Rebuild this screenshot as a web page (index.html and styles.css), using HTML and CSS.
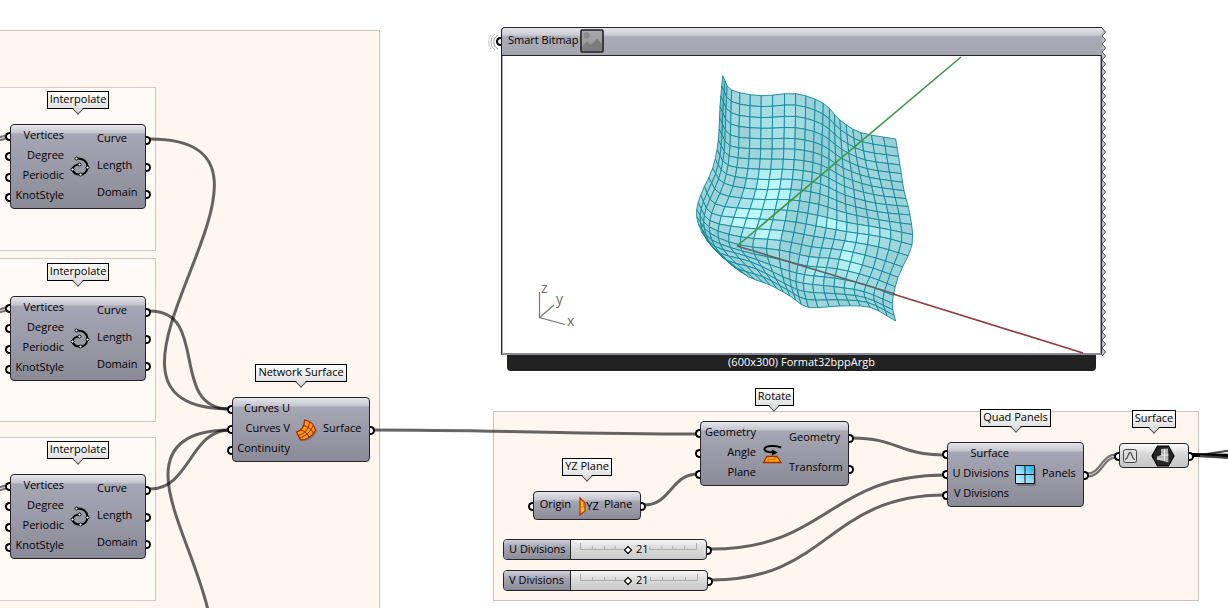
FILE: index.html
```html
<!DOCTYPE html>
<html lang="en">
<head>
<meta charset="utf-8">
<title>Node canvas</title>
<link rel="stylesheet" href="styles.css">
</head>
<body>
<svg class="defs" width="0" height="0" aria-hidden="true">
  <defs>
    <symbol id="i-curve" viewBox="0 0 24 24">
      <path d="M8.500 3.500C15 3 19.500 6.500 19.500 12.500C19 17 16 19.500 12.500 19.500C8 19.500 5 17.500 4.500 14.500C5 11.500 8 9.500 11.500 9.500" fill="none" stroke="#000" stroke-width="2"/>
      <g fill="#fff" stroke="#000"><circle cx="8.500" cy="3.500" r="1.500"/><circle cx="19.500" cy="12.500" r="1.500"/><circle cx="12.500" cy="19.500" r="1.500"/><circle cx="4.500" cy="14.500" r="1.500"/><circle cx="11.500" cy="9.500" r="1.500"/></g>
    </symbol>
    <symbol id="i-network" viewBox="0 0 24 24">
      <path d="M11.500 3C18 4 21.500 8 22 13C19 19 13 22.500 7 22.500L3 14.500C8 13 11 9.500 11.500 3Z" fill="#555" opacity=".35" transform="translate(1 1)"/>
      <path d="M10.500 2C17 3 20.500 7 21.500 12.500C18 18.500 13 22 6.500 22L2.500 14C8 12.500 10.500 8.500 10.500 2Z" fill="#ff9d00" stroke="#a32005" stroke-width="1.200"/>
      <path d="M15.500 4C15 11 10.500 16 4 17.500M19 7.500C16.500 14 12 18 5.500 20M9.500 7.500C14 8.500 18 11.500 19.500 15.500M6.500 12C11 13 14 16 15 19.500" fill="none" stroke="#a32005"/>
    </symbol>
    <symbol id="i-plane" viewBox="0 0 24 24">
      <path d="M4 4L9 9V17L4 21Z" fill="#ffc20a" stroke="#c62a08" stroke-width="1.300"/>
      <path d="M5 13H7.500V9" fill="none" stroke="#e87900"/>
    </symbol>
    <symbol id="i-rotate" viewBox="0 0 24 24">
      <path d="M7 14.500H17L21 20.500H3.500Z" fill="#ffb000" stroke="#a32c05" stroke-width="1.300"/>
      <path d="M8 20V17.500H15V15" fill="none" stroke="#d36a00"/>
      <path d="M21 5.500C16 3 4.500 3.800 4.500 7C4.500 9.500 9 10.300 13 10.300" fill="none" stroke="#000" stroke-width="2"/>
      <path d="M12 7.500L18 10.500L12 13.500Z"/>
    </symbol>
    <linearGradient id="blue" x1="0" y1="1" x2="1" y2="0"><stop offset="0" stop-color="#c9eeff"/><stop offset=".5" stop-color="#8ed9fa"/><stop offset="1" stop-color="#00aeef"/></linearGradient>
    <symbol id="i-quad" viewBox="0 0 24 24">
      <path d="M4 5H23V23H4Z" fill="#333" opacity=".35"/>
      <path d="M2.500 2.500H21.500V20.500H2.500Z" fill="url(#blue)" stroke="#111"/>
      <path d="M12 2.500V20.500M2.500 11.500H21.500" stroke="#111"/>
    </symbol>
    <linearGradient id="pic" x1="0" y1="0" x2="0" y2="1"><stop offset="0" stop-color="#aaa9ac"/><stop offset="1" stop-color="#929294"/></linearGradient>
    <pattern id="teeth" width="6" height="8" patternUnits="userSpaceOnUse">
      <path d="M1 0L4.500 4L1 8Z" fill="#c9c9d2"/><path d="M1 0L4.500 4L1 8" fill="none" stroke="#444"/>
    </pattern>
  </defs>
</svg>

<main class="canvas">
  <div class="group group-curves"></div>
  <div class="group group-in group-in-1"></div>
  <div class="group group-in group-in-2"></div>
  <div class="group group-in group-in-3"></div>
  <div class="group group-panels"></div>

  <svg class="wires" aria-hidden="true">
    <g class="wire">
      <path d="M150 139C335 139 43 409 230 409"/>
      <path d="M150 311C210 311 168 409 230 409"/>
      <path d="M150 489C190 489 190 430 230 430"/>
      <path d="M230 430C196 430 168 440 168 475C168 510 196 560 208 610"/>
      <path d="M373 430C500 430 570 434 698 434"/>
      <path d="M644 505C671 505 671 474 698 474"/>
      <path d="M852 438C898 438 898 455 945 455"/>
      <path d="M711 549C828 549 828 475 945 475"/>
      <path d="M712 580C828 580 828 495 945 495"/>
    </g>
    <g class="wire-list">
      <path d="M1087 475C1102 475 1102 456 1116 456"/>
      <path d="M-8 141L6 137M-8 313L6 309M-8 491L6 487"/>
    </g>
    <g class="wire-list-core">
      <path d="M1087 475C1102 475 1102 456 1116 456"/>
      <path d="M-8 141L6 137M-8 313L6 309M-8 491L6 487"/>
    </g>
    <path class="wire-soft" d="M1200 455L1240 449"/>
    <path class="wire-out" d="M1192 455L1240 456"/>
    <path class="wire-soft" d="M1200 456L1240 459"/>
  </svg>

  <section class="item interpolate-1">
    <h2 class="tag">Interpolate</h2>
    <div class="node in-53 tall">
      <ul class="ins"><li>Vertices</li><li>Degree</li><li>Periodic</li><li>KnotStyle</li></ul>
      <svg class="icon"><use href="#i-curve"/></svg>
      <ul class="outs"><li>Curve</li><li>Length</li><li>Domain</li></ul>
    </div>
  </section>
  <section class="item interpolate-2">
    <h2 class="tag">Interpolate</h2>
    <div class="node in-53 tall">
      <ul class="ins"><li>Vertices</li><li>Degree</li><li>Periodic</li><li>KnotStyle</li></ul>
      <svg class="icon"><use href="#i-curve"/></svg>
      <ul class="outs"><li>Curve</li><li>Length</li><li>Domain</li></ul>
    </div>
  </section>
  <section class="item interpolate-3">
    <h2 class="tag">Interpolate</h2>
    <div class="node in-53 tall">
      <ul class="ins"><li>Vertices</li><li>Degree</li><li>Periodic</li><li>KnotStyle</li></ul>
      <svg class="icon"><use href="#i-curve"/></svg>
      <ul class="outs"><li>Curve</li><li>Length</li><li>Domain</li></ul>
    </div>
  </section>
  <section class="item network">
    <h2 class="tag">Network Surface</h2>
    <div class="node in-57">
      <ul class="ins"><li>Curves U</li><li>Curves V</li><li>Continuity</li></ul>
      <svg class="icon"><use href="#i-network"/></svg>
      <ul class="outs"><li>Surface</li></ul>
    </div>
  </section>
  <section class="item yz">
    <h2 class="tag">YZ Plane</h2>
    <div class="node in-37 short">
      <ul class="ins"><li>Origin</li></ul>
      <span class="icon-text"><svg class="icon"><use href="#i-plane"/></svg><b>YZ</b></span>
      <ul class="outs"><li>Plane</li></ul>
    </div>
  </section>
  <section class="item rotate">
    <h2 class="tag">Rotate</h2>
    <div class="node in-55">
      <ul class="ins"><li>Geometry</li><li>Angle</li><li>Plane</li></ul>
      <svg class="icon"><use href="#i-rotate"/></svg>
      <ul class="outs"><li>Geometry</li><li>Transform</li></ul>
    </div>
  </section>
  <section class="item quad">
    <h2 class="tag">Quad Panels</h2>
    <div class="node in-61">
      <ul class="ins"><li>Surface</li><li>U Divisions</li><li>V Divisions</li></ul>
      <svg class="icon"><use href="#i-quad"/></svg>
      <ul class="outs"><li>Panels</li></ul>
    </div>
  </section>
  <section class="item surface">
    <h2 class="tag">Surface</h2>
    <div class="param">
      <svg width="14" height="14" viewBox="0 0 14 14"><rect x=".5" y=".5" width="13" height="13" rx="2" fill="#ddd" stroke="#444"/><path d="M2 10.500C5 10.500 5 3.500 7 3.500S9 10.500 12 10.500" fill="none" stroke="#555" stroke-width="1.300"/></svg>
      <svg width="24" height="22" viewBox="0 0 24 22"><path d="M6.500 1H17.500L23 11L17.500 21H6.500L1 11Z" fill="#262626" stroke="#000" stroke-width="1.200"/><path d="M10 4L17 3.500L17.500 17.500L6 14.500V11.500L10 10Z" fill="#b4b4b4"/><path d="M13.500 4V16M10 10H17.500M6 14H12" stroke="#eee" fill="none"/></svg>
    </div>
  </section>

  <div class="slider slider-u">
    <label for="u">U Divisions</label>
    <div class="rail">
      <svg class="ticks" viewBox="0 0 118 8" preserveAspectRatio="none"><path d="M0.500 0V6.500H45M70 6.500H117.500V0M12.500 3V6M24.500 3V6M35.500 3V6M70.500 3V6M82.500 3V6M93.500 3V6M105.500 3V6"/></svg>
      <input id="u" type="range" min="0" max="50" value="21">
      <output for="u">21</output>
    </div>
  </div>
  <div class="slider slider-v">
    <label for="v">V Divisions</label>
    <div class="rail">
      <svg class="ticks" viewBox="0 0 118 8" preserveAspectRatio="none"><path d="M0.500 0V6.500H45M70 6.500H117.500V0M12.500 3V6M24.500 3V6M35.500 3V6M70.500 3V6M82.500 3V6M93.500 3V6M105.500 3V6"/></svg>
      <input id="v" type="range" min="0" max="50" value="21">
      <output for="v">21</output>
    </div>
  </div>

  <section class="bitmap">
    <svg class="waves" width="14" height="20" viewBox="0 0 14 20"><g fill="none"><path d="M11 3A8 8 0 0 0 11 17" stroke="#999"/><path d="M8 2A10 10 0 0 0 8 18" stroke="#aaa"/><path d="M4 3A11 11 0 0 0 4 17" stroke="#ccc"/></g></svg>
    <header class="bitmap-head">
      <h2>Smart Bitmap</h2>
      <svg width="24" height="24" viewBox="0 0 24 24"><rect x="1" y="1" width="22" height="22" rx="1" fill="url(#pic)" stroke="#222" stroke-width="1.600"/><circle cx="6.500" cy="6.500" r="3.200" fill="#8b8b8d"/><path d="M2 18L7 12.500L11 16L17 9.500L22 15V22H2Z" fill="#7c7c7e"/></svg>
    </header>
    <div class="bitmap-view">
      <svg viewBox="502 56 599 298">
        <g id="mesh"></g>
        <path d="M737 246L961 57" stroke="#3d9648" stroke-width="1.600"/>
        <path d="M737 246L895 294" stroke="#5c6468" stroke-width="1.600"/>
        <path d="M893 294L1083 353" stroke="#913b3e" stroke-width="1.600"/>
        <path d="M539.500 292V317.500L565 324.500M539.500 317.500L554 305" fill="none" stroke="#777" stroke-width="1.200"/>
        <g class="axis"><text x="541" y="293">z</text><text x="556" y="304">y</text><text x="567" y="326">x</text></g>
      </svg>
    </div>
    <svg class="torn"><rect width="6" height="100%" fill="url(#teeth)"/></svg>
    <footer class="bitmap-foot">(600x300) Format32bppArgb</footer>
  </section>
</main>
<script src="mesh.js"></script>
</body>
</html>
```
FILE: styles.css
```css
*, *::before, *::after { box-sizing: border-box; }
body {
  margin: 0;
  background: #fff;
  color: #000;
  font: 11px/14px "Open Sans", "Noto Sans", sans-serif;
}
h2 { margin: 0; font: inherit; }
ul { margin: 0; padding: 0; list-style: none; }
.defs { position: absolute; }
.canvas { position: relative; height: 100vh; overflow: hidden; }

.group { position: absolute; border: 1px solid #c9c3c0; background: #fff6f0; }
.group-curves { left: -2px; top: 30px; width: 382px; bottom: -2px; }
.group-in { left: -2px; width: 158px; height: 164px; background: #fffaf5; border-color: #d0cac6; }
.group-in-1 { top: 87px; }
.group-in-2 { top: 258px; }
.group-in-3 { top: 437px; }
.group-panels { left: 493px; top: 411px; width: 706px; height: 190px; }

.wires { position: absolute; inset: 0; width: 100%; height: 100%; fill: none; }
.wire { stroke: rgba(0, 0, 0, .6); stroke-width: 3px; }
.wire-list { stroke: #77736f; stroke-width: 5px; }
.wire-list-core { stroke: #ddd8d5; stroke-width: 1px; }
.wire-out { stroke: #000; stroke-width: 4px; }
.wire-soft { stroke: #444; stroke-width: 2px; }

.item { position: absolute; display: flex; flex-direction: column; align-items: center; }
.interpolate-1 { left: 10px; top: 91px; width: 136px; }
.interpolate-2 { left: 10px; top: 263px; width: 136px; }
.interpolate-3 { left: 10px; top: 441px; width: 136px; }
.network { left: 232px; top: 364px; width: 138px; }
.yz { left: 533px; top: 458px; width: 108px; }
.rotate { left: 700px; top: 388px; width: 149px; }
.quad { left: 947px; top: 409px; width: 137px; }
.surface { left: 1119px; top: 410px; width: 70px; }

.tag {
  position: relative;
  height: 18px;
  margin-bottom: 15px;
  padding: 0 2px;
  border: 1px solid #000;
  background: linear-gradient(#fff, #e2e2e2);
  line-height: 14px;
  white-space: nowrap;
}
.tag::after {
  content: "";
  position: absolute;
  left: 50%;
  top: 100%;
  width: 8px;
  height: 8px;
  margin: -3px 0 0 -4px;
  border: solid #555;
  border-width: 0 1px 1px 0;
  background: linear-gradient(135deg, transparent 50%, #dedede 50%);
  transform: rotate(45deg);
}

.node {
  display: grid;
  align-items: center;
  width: 100%;
  height: 65px;
  padding: 1px 0;
  border: 1px solid #24242a;
  border-radius: 4px;
  background: linear-gradient(#e6e6ec 0, #c4c4ce 8px, #a7a6b4 9px, #8b8a97 100%);
}
.tall { height: 85px; }
.short { height: 29px; }
.in-37 { grid-template-columns: 37px 33px 1fr; }
.in-53 { grid-template-columns: 53px 33px 1fr; }
.in-55 { grid-template-columns: 55px 33px 1fr; }
.in-57 { grid-template-columns: 57px 33px 1fr; }
.in-61 { grid-template-columns: 61px 33px 1fr; }
.ins, .outs { display: flex; flex-direction: column; height: 100%; }
.ins { text-align: right; }
.ins li, .outs li {
  position: relative;
  display: flex;
  flex: 1;
  align-items: center;
  padding-bottom: 3px;
  white-space: nowrap;
}
.ins li { justify-content: flex-end; }
.ins li::before, .outs li::before, .slider::after, .param::before, .param::after, .bitmap::before {
  content: "";
  position: absolute;
  top: calc(50% - 4px);
  width: 5px;
  height: 9px;
  border: 2px solid #000;
  background: #fff;
}
.ins li::before, .param::before, .bitmap::before { left: -6px; border-right: 0; border-radius: 5px 0 0 5px; }
.outs li::before, .slider::after, .param::after { right: -6px; border-left: 0; border-radius: 0 5px 5px 0; }
.icon { justify-self: center; width: 24px; height: 24px; margin-right: 2px; }
.icon-text { display: flex; align-items: center; justify-content: center; }
.icon-text .icon { flex: none; margin-right: -14px; }
.icon-text b { font-weight: 400; }

.param {
  position: relative;
  display: flex;
  align-items: center;
  justify-content: space-between;
  width: 100%;
  height: 25px;
  padding: 0 13px 0 3px;
  border: 1px solid #24242a;
  border-radius: 4px;
  background: linear-gradient(#fff, #d9d9d9 9px, #c6c6c6);
}

.slider {
  position: absolute;
  display: flex;
  height: 21px;
  border: 1px solid #24242a;
  border-radius: 4px;
  background: linear-gradient(#f4f4f4, #dcdcdc 8px, #c9c9c9);
}
.slider-u { left: 503px; top: 539px; width: 204px; }
.slider-v { left: 503px; top: 570px; width: 205px; }
.slider label {
  width: 67px;
  padding-left: 5px;
  border-right: 1px solid #24242a;
  border-radius: 3px 0 0 3px;
  background: linear-gradient(#d0d0d8 0, #a7a6b4 7px, #8b8a97 100%);
  line-height: 17px;
  white-space: nowrap;
}
.rail { position: relative; flex: 1; margin: 0 9px; }
.ticks { position: absolute; left: 0; top: 3px; width: 100%; height: 8px; fill: none; stroke: #aaa; }
.rail input {
  position: absolute;
  left: -2px;
  top: 0;
  width: 100%;
  height: 19px;
  margin: 0;
  appearance: none;
  background: none;
}
.rail input::-webkit-slider-thumb {
  appearance: none;
  box-sizing: border-box;
  width: 6px;
  height: 6px;
  border: 1px solid #000;
  border-radius: 0;
  background: #fff;
  outline: 1px solid rgba(0, 0, 0, .5);
  outline-offset: -1px;
  transform: rotate(45deg);
}
.rail output { position: absolute; left: 56px; line-height: 17px; pointer-events: none; }

.bitmap { position: absolute; left: 501px; top: 27px; width: 601px; }
.bitmap::before { top: 10px; left: -5px; z-index: 1; }
.waves { position: absolute; left: -14px; top: 5px; }
.bitmap-head {
  display: flex;
  align-items: center;
  gap: 2px;
  height: 29px;
  padding: 0 0 1px 6px;
  border: 1px solid #24242a;
  border-right: 0;
  border-radius: 4px 0 0 0;
  background: linear-gradient(#e3e3e8 0, #cbcbd2 7px, #aaa9b6 9px, #a5a4b1 100%);
}
.bitmap-head h2 { padding-bottom: 2px; }
.bitmap-view {
  border: 1px solid #24242a;
  border-top: 0;
  border-bottom-color: #8b8a97;
  background: #fff;
  box-shadow: inset 1px 0 #a7a6b4, inset -1px 0 #a7a6b4, inset 0 -1px #8b8a97;
}
.bitmap-view svg { display: block; width: 100%; }
.axis { fill: #6d6d6d; font: 14px "Open Sans", sans-serif; }
.torn { position: absolute; left: 100%; top: 1px; width: 6px; height: 328px; margin-left: -1px; }
.bitmap-foot {
  height: 16px;
  margin: 0 6px;
  border-radius: 0 0 4px 4px;
  background: #222;
  color: #fff;
  line-height: 14px;
  text-align: center;
}
```
FILE: mesh.js
```javascript
// Control lattice of the surface, every third panel edge, in thirds of a pixel from ORIGIN.
const ORIGIN = [680, 60];
const lattice = [
  [[128,47],[155,90],[244,107],[347,101],[430,130],[480,180],[543,218],[647,237]],
  [[120,140],[152,192],[243,205],[346,203],[427,225],[485,268],[556,300],[660,315]],
  [[115,240],[148,288],[241,297],[343,299],[424,315],[492,352],[575,378],[672,392]],
  [[98,325],[132,370],[228,388],[333,388],[420,402],[497,432],[592,455],[690,465]],
  [[62,405],[95,460],[200,475],[316,482],[408,498],[500,515],[600,530],[696,555]],
  [[50,470],[90,520],[180,555],[298,570],[388,590],[478,598],[580,625],[654,652]],
  [[80,540],[120,580],[212,605],[308,650],[370,670],[462,680],[552,695],[637,730]],
  [[150,612],[205,650],[270,675],[330,708],[385,742],[480,738],[570,742],[647,783]]
];
const N = 21;

function spline(points, t) {
  const last = points.length - 1;
  const i = Math.min(Math.floor(t), last - 1);
  const u = t - i;
  const b = points[i], c = points[i + 1];
  const a = points[i - 1] || b.map((v, k) => 2 * v - c[k]);
  const d = points[i + 2] || c.map((v, k) => 2 * v - b[k]);
  return b.map((v, k) => 0.5 * (2 * v + (c[k] - a[k]) * u
    + (2 * a[k] - 5 * v + 4 * c[k] - d[k]) * u * u
    + (3 * v - a[k] - 3 * c[k] + d[k]) * u * u * u));
}
const at = (r, c) => spline(lattice.map(row => spline(row, c / 3)), r / 3);

// Highlights: x, y, radius x, radius y, strength
const lights = [[275,395,60,65,1.1],[195,475,65,40,1],[455,487,45,20,1],[570,520,60,25,.6],
  [510,600,40,65,.9],[400,630,35,40,.6],[260,525,50,25,.7],[290,170,90,110,.3]];
const shades = [[120,130,18,120,.5],[90,590,30,60,.5],[430,240,50,110,.15],[345,500,30,80,.15]];
const glow = (list, x, y) => list.reduce((s, [cx, cy, rx, ry, k]) =>
  s + k * Math.exp(-(((x - cx) / rx) ** 2) - ((y - cy) / ry) ** 2), 0);
const mix = (a, b, k) => a.map((v, i) => Math.round(v + (b[i] - v) * k));

const mesh = document.getElementById("mesh");
for (let r = 0; r < N; r++) {
  for (let c = 0; c < N; c++) {
    const quad = [at(r, c), at(r, c + 1), at(r + 1, c + 1), at(r + 1, c)];
    const x = (quad[0][0] + quad[2][0]) / 2, y = (quad[0][1] + quad[2][1]) / 2;
    const vary = ((r * 7 + c * 13 + r * c) % 5) / 5 * 0.18;
    let color = mix([153, 208, 216], [188, 252, 255], Math.min(1, glow(lights, x, y) + vary));
    color = mix(color, [60, 165, 180], Math.min(.8, glow(shades, x, y)));
    const p = document.createElementNS("http://www.w3.org/2000/svg", "polygon");
    p.setAttribute("points", quad.map(q => (ORIGIN[0] + q[0] / 3).toFixed(1) + "," + (ORIGIN[1] + q[1] / 3).toFixed(1)).join(" "));
    p.setAttribute("fill", "rgb(" + color + ")");
    p.setAttribute("stroke", "#148797");
    p.setAttribute("stroke-width", ".9");
    mesh.appendChild(p);
  }
}
```
